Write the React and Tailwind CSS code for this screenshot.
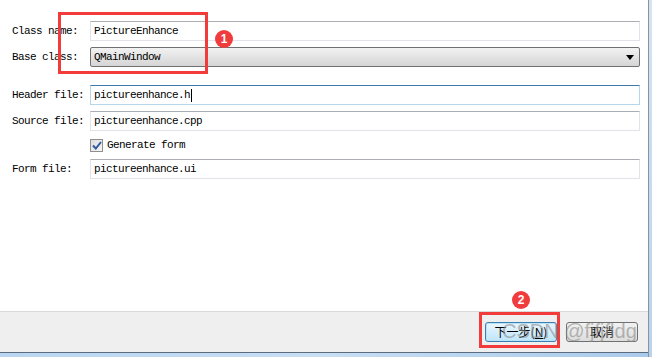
import React from "react";

const mono = { fontFamily: '"Liberation Mono", "DejaVu Sans Mono", monospace' };

const Field = ({ label, children }) => (
  <div className="flex h-[20px] items-center">
    <div className="w-[78px] shrink-0 text-[11px] tracking-[-0.6px] text-black" style={mono}>
      {label}
    </div>
    {children}
  </div>
);

const TextInput = ({ value, focused }) => (
  <div
    className={
      "flex h-[20px] w-[550px] items-center border pl-[3px] text-[11px] tracking-[-0.6px] text-black " +
      (focused
        ? "border-[#b5d6ec] border-t-[#3d7bad] bg-white"
        : "border-[#e2e3ea] border-t-[#abadb3] bg-white")
    }
    style={mono}
  >
    <span>{value}</span>
    {focused && <span className="ml-[1px] inline-block h-[13px] w-[1px] bg-black" />}
  </div>
);

export default function App() {
  return (
    <div className="relative flex h-[357px] w-[652px] overflow-hidden bg-white">
      <div className="flex w-[648px] flex-col">
        {/* form area */}
        <div className="h-[311px] bg-white pl-[12px] pt-[21px]">
          <Field label="Class name:">
            <TextInput value="PictureEnhance" />
          </Field>
          <div className="mt-[6px]">
            <Field label="Base class:">
              <div
                className="flex h-[20px] w-[550px] items-center justify-between rounded-[2px] border border-[#707070] bg-gradient-to-b from-[#f2f2f2] to-[#d5d5d5] pl-[3px] pr-[5px] text-[11px] tracking-[-0.6px] text-black"
                style={mono}
              >
                <span>QMainWindow</span>
                <svg width="8" height="5" viewBox="0 0 8 5">
                  <path d="M0 0 H8 L4 5 Z" fill="#000" />
                </svg>
              </div>
            </Field>
          </div>
          <div className="mt-[18px]">
            <Field label="Header file:">
              <TextInput value="pictureenhance.h" focused />
            </Field>
          </div>
          <div className="mt-[6px]">
            <Field label="Source file:">
              <TextInput value="pictureenhance.cpp" />
            </Field>
          </div>
          <div className="mt-[4px]">
            <Field label="">
              <div className="flex items-center">
                <div className="flex h-[13px] w-[13px] items-center justify-center border border-[#8f8f8f] bg-gradient-to-br from-[#dcdcdc] to-[#f6f6f6]">
                  <svg width="10" height="9" viewBox="0 0 10 9">
                    <path d="M1 4.5 L3.8 7.5 L9 1" stroke="#2f5a9e" strokeWidth="2" fill="none" />
                  </svg>
                </div>
                <span className="ml-[4px] text-[11px] tracking-[-0.6px] text-black" style={mono}>
                  Generate form
                </span>
              </div>
            </Field>
          </div>
          <div className="mt-[4px]">
            <Field label="Form file:">
              <TextInput value="pictureenhance.ui" />
            </Field>
          </div>
        </div>

        {/* footer */}
        <div className="flex h-[41px] items-center justify-end gap-[9px] border-t border-[#d9d9d9] bg-[#efefef] pr-[10px]">
          <button
            className="flex h-[20px] w-[72px] items-center justify-center rounded-[3px] border border-[#3c7fb1] bg-gradient-to-b from-[#eaf6fd] to-[#bee6fd] text-[12px] text-black shadow-[inset_0_0_0_1px_#b8e4fb]"
            style={{ fontFamily: '"Noto Sans CJK SC", "Liberation Sans", sans-serif' }}
          >
            下一步(<span className="underline">N</span>)
          </button>
          <button
            className="flex h-[20px] w-[72px] items-center justify-center rounded-[3px] border border-[#707070] bg-gradient-to-b from-[#f2f2f2] to-[#dddddd] text-[12px] text-black"
            style={{ fontFamily: '"Noto Sans CJK SC", "Liberation Sans", sans-serif' }}
          >
            取消
          </button>
        </div>

        {/* window frame bottom */}
        <div className="h-[5px] border-t border-[#5b6b80] bg-gradient-to-r from-[#b9d6f2] via-[#c8def3] to-[#a9cbeb]" />
      </div>

      {/* window frame right */}
      <div className="flex w-[4px]">
        <div className="w-[1px] bg-[#8a929c]" />
        <div className="flex-1 bg-gradient-to-b from-[#d5e4f2] to-[#b7d3ee]" />
      </div>

      {/* annotations */}
      <div className="absolute left-[58px] top-[12px] h-[62px] w-[150px] border-[3px] border-[#f23b3b]" />
      <div className="absolute left-[215px] top-[30px] flex h-[18px] w-[18px] items-center justify-center rounded-full bg-[#f03c3c] text-[12px] font-bold text-white" style={{ fontFamily: '"Liberation Sans", sans-serif' }}>
        1
      </div>
      <div className="absolute left-[479px] top-[312px] h-[36px] w-[81px] border-[3px] border-[#f23b3b]" />
      <div className="absolute left-[512px] top-[291px] flex h-[18px] w-[18px] items-center justify-center rounded-full bg-[#f03c3c] text-[12px] font-bold text-white" style={{ fontFamily: '"Liberation Sans", sans-serif' }}>
        2
      </div>

      {/* watermark */}
      <div
        className="pointer-events-none absolute left-[502px] top-[318px] text-[20px] leading-[26px] text-[#8c8c8c] opacity-60"
        style={{ fontFamily: '"Liberation Sans", sans-serif' }}
      >
        CSDN @fjfjfldg
      </div>
    </div>
  );
}
